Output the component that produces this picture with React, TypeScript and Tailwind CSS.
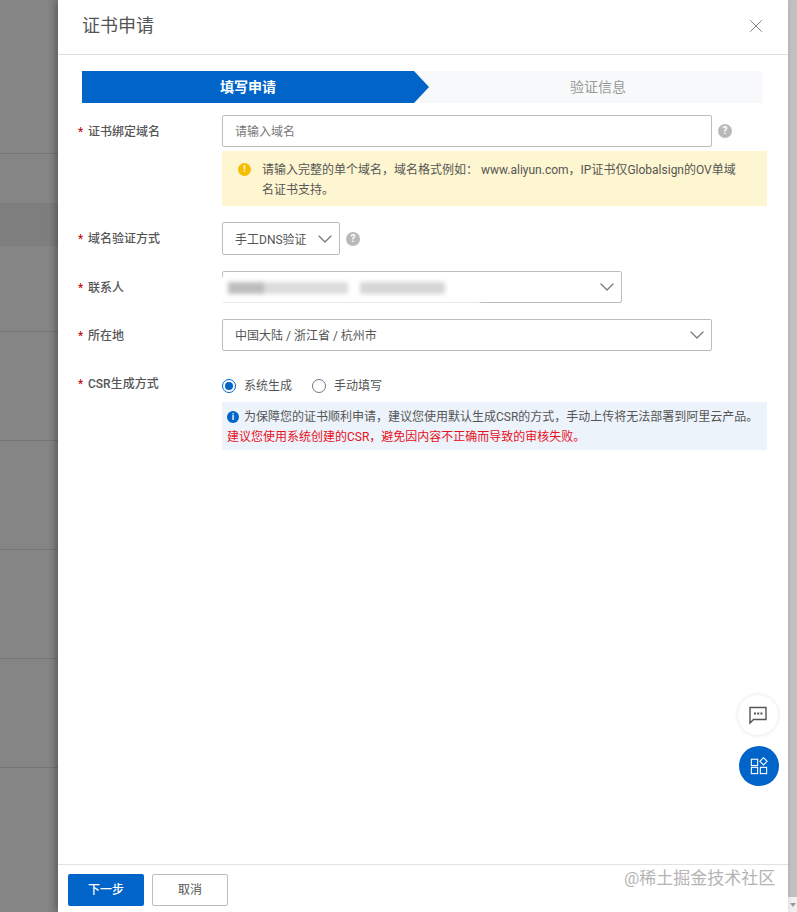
import { ChevronDown, X } from "lucide-react"

const FONT = "font-['Roboto','Noto_Sans_CJK_SC',sans-serif]"

// backdrop list behind the drawer, only row lines are visible
const BACK_ROWS = [
  { h: 154 },
  { h: 49 },
  { h: 43, band: true },
  { h: 86 },
  { h: 109 },
  { h: 109 },
  { h: 109 },
  { h: 109 },
]

function HelpDot() {
  return (
    <span className="flex h-[14px] w-[14px] shrink-0 items-center justify-center rounded-full bg-[#b9b9b9] text-[10px] font-bold leading-none text-white">
      ?
    </span>
  )
}

function FormRow({ label, className = "", children }: { label: string; className?: string; children: React.ReactNode }) {
  return (
    <div className={`flex ${className}`}>
      <div className="flex h-[32px] w-[144px] shrink-0 text-[12px] leading-[34px] text-[#555]">
        <span className="w-[10px] shrink-0 text-[#c00000]">*</span>
        <span className="font-medium">{label}</span>
      </div>
      <div className="min-w-0 flex-1">{children}</div>
    </div>
  )
}

function SelectBox({ text, className = "" }: { text?: string; className?: string }) {
  return (
    <div className={`flex items-center justify-between rounded-[2px] border border-[#bdbdbd] bg-white pl-[12px] pr-[2px] text-[12px] text-[#555] ${className}`}>
      <span className="pt-[2px]">{text}</span>
      <ChevronDown className="h-[24px] w-[24px] text-[#777]" strokeWidth={1.25} />
    </div>
  )
}

export default function App() {
  return (
    <div className={`relative flex h-[912px] w-[797px] overflow-hidden bg-white ${FONT}`}>
      {/* dimmed page */}
      <div className="w-[58px] shrink-0 bg-[#858585]">
        {BACK_ROWS.map((r, i) => (
          <div
            key={i}
            style={{ height: r.h }}
            className={r.band ? "bg-[#7e7e7e]" : i === 0 || i > 2 ? "border-b border-[#767676]" : ""}
          />
        ))}
      </div>

      {/* drawer */}
      <div className="z-10 flex w-[730px] shrink-0 flex-col bg-white shadow-[-3px_0_7px_rgba(0,0,0,0.3)]">
        <div className="flex h-[55px] shrink-0 items-center justify-between border-b border-[#dfdfdf] pb-[3px] pl-[24px] pr-[21px]">
          <span className="text-[18px] text-[#555]">证书申请</span>
          <X className="h-[22px] w-[22px] text-[#666]" strokeWidth={0.9} />
        </div>

        <div className="flex-1 pl-[20px]">
          {/* steps */}
          <div className="ml-[4px] mt-[16px] flex h-[32px] w-[681px]">
            <div className="flex w-[347px] shrink-0 items-center justify-center bg-[#0064c8] pr-[15px] text-[14px] font-bold text-white [clip-path:polygon(0_0,332px_0,347px_50%,332px_100%,0_100%)]">
              填写申请
            </div>
            <div className="-ml-[15px] flex flex-1 items-center justify-center bg-[#f7f9fa] pl-[19px] text-[14px] text-[#999]">
              验证信息
            </div>
          </div>

          <FormRow label="证书绑定域名" className="mt-[12px]">
            <div className="flex items-center">
              <div className="flex h-[32px] w-[490px] items-center rounded-[2px] border border-[#bdbdbd] px-[12px] pt-[2px] text-[12px] text-[#777]">
                请输入域名
              </div>
              <span className="ml-[6px]"><HelpDot /></span>
            </div>
            <div className="mt-[4px] flex h-[55px] w-[545px] bg-[#fef6d0] pl-[16px] pr-[30px] pt-[9px] text-[12px] leading-[20px] text-[#555]">
              <span className="mr-[11px] mt-[3px] flex h-[13px] w-[13px] shrink-0 items-center justify-center rounded-full bg-[#f5bd00] text-[9px] font-bold leading-none text-white">!</span>
              <p>请输入完整的单个域名，域名格式例如： www.aliyun.com，IP证书仅Globalsign的OV单域名证书支持。</p>
            </div>
          </FormRow>

          <FormRow label="域名验证方式" className="mt-[16px]">
            <div className="flex items-center">
              <SelectBox text="手工DNS验证" className="h-[33px] w-[118px]" />
              <span className="ml-[6px]"><HelpDot /></span>
            </div>
          </FormRow>

          <FormRow label="联系人" className="mt-[16px]">
            <div className="relative">
              <SelectBox className="h-[32px] w-[400px]" />
              {/* masked contact */}
              <div className="absolute left-[-7px] top-[6px] h-[26px] w-[265px] bg-white blur-[1px]" />
              <div className="absolute left-[6px] top-[11px] flex blur-[2px]">
                <div className="h-[12px] w-[36px] bg-[#bdbdbd]" />
                <div className="h-[12px] w-[84px] bg-[#dcdcdc]" />
                <div className="ml-[12px] h-[12px] w-[85px] bg-[#d6d6d6]" />
              </div>
            </div>
          </FormRow>

          <FormRow label="所在地" className="mt-[16px]">
            <SelectBox text="中国大陆 / 浙江省 / 杭州市" className="h-[32px] w-[490px]" />
          </FormRow>

          <FormRow label="CSR生成方式" className="mt-[16px]">
            <div className="flex h-[33px] items-center pt-[4px] text-[12px] text-[#555]">
              <span className="flex h-[14px] w-[14px] items-center justify-center rounded-full border border-[#0064c8]">
                <span className="h-[8px] w-[8px] rounded-full bg-[#0064c8]" />
              </span>
              <span className="ml-[8px]">系统生成</span>
              <span className="ml-[20px] h-[14px] w-[14px] rounded-full border border-[#777]" />
              <span className="ml-[8px]">手动填写</span>
            </div>
            <div className="mt-[2px] h-[48px] w-[545px] bg-[#edf3fb] px-[5px] pt-[5px] text-[12px] leading-[20px]">
              <div className="flex items-center text-[#555]">
                <span className="mr-[5px] flex h-[12px] w-[12px] shrink-0 items-center justify-center rounded-full bg-[#0064c8] text-[9px] font-bold leading-none text-white">i</span>
                为保障您的证书顺利申请，建议您使用默认生成CSR的方式，手动上传将无法部署到阿里云产品。
              </div>
              <div className="text-[#e8101c]">建议您使用系统创建的CSR，避免因内容不正确而导致的审核失败。</div>
            </div>
          </FormRow>
        </div>

        {/* footer */}
        <div className="flex h-[48px] shrink-0 gap-[8px] border-t border-[#e2e2e2] pl-[10px] pt-[9px]">
          <div className="flex h-[32px] w-[76px] items-center justify-center rounded-[2px] bg-[#0064c8] text-[12px] font-medium text-white">下一步</div>
          <div className="flex h-[32px] w-[76px] items-center justify-center rounded-[2px] border border-[#bdbdbd] text-[12px] text-[#555]">取消</div>
        </div>
      </div>

      {/* scrollbar */}
      <div className="flex w-[9px] shrink-0 flex-col bg-[#f1f1f1]">
        <div className="h-[897px] bg-[#c1c1c1]" />
        <div className="mt-[6px] h-0 w-0 self-center border-x-[3px] border-t-[4px] border-x-transparent border-t-[#999]" />
      </div>

      {/* floating buttons */}
      <div className="absolute left-[738px] top-[695px] z-20 flex h-[40px] w-[40px] items-center justify-center rounded-full bg-white shadow-[0_0_4px_rgba(0,0,0,0.12)]">
        <svg width="20" height="20" viewBox="0 0 20 20" fill="none" stroke="#555" strokeWidth="1.4">
          <path d="M2 2.5h16v12H5.5L2 18z" />
          <path d="M6 8.5h2M9.2 8.5h2M12.4 8.5h2" strokeWidth="2" />
        </svg>
      </div>
      <div className="absolute left-[739px] top-[746px] z-20 flex h-[40px] w-[40px] items-center justify-center rounded-full bg-[#0064c8]">
        <svg width="18" height="18" viewBox="0 0 20 20" fill="none" stroke="#fff" strokeWidth="1.2">
          <rect x="1.5" y="2.5" width="7" height="7" />
          <rect x="1.5" y="11.5" width="7" height="7" />
          <rect x="11.5" y="11.5" width="7" height="7" />
          <path d="M15 0.8l4 4-4 4-4-4z" />
        </svg>
      </div>

      {/* watermark */}
      <span className="absolute left-[624px] top-[866px] z-20 text-[17px] leading-[24px] text-[#b4b4b4]">@稀土掘金技术社区</span>
    </div>
  )
}
